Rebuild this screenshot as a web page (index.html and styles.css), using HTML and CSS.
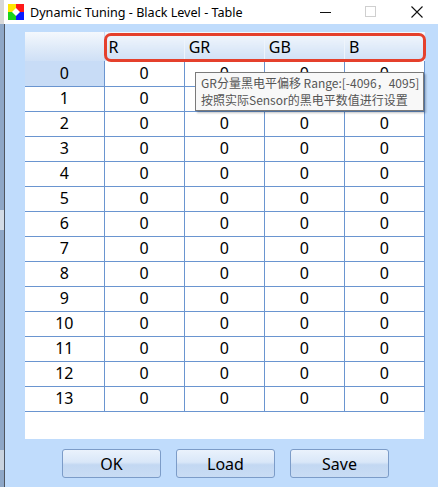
FILE: index.html
```html
<!DOCTYPE html>
<html>
<head>
<meta charset="utf-8">
<link rel="stylesheet" href="styles.css">
</head>
<body>
<div class="window">
  <div class="titlebar">
    <svg class="appicon" width="16" height="16" viewBox="0 0 16 16">
      <rect x="0" y="0" width="8" height="8" fill="#ffe600"/>
      <rect x="8" y="0" width="8" height="8" fill="#ff1a1a"/>
      <rect x="0" y="8" width="8" height="8" fill="#1bd41b"/>
      <rect x="8" y="8" width="8" height="8" fill="#0a1aff"/>
      <polygon points="8,4 12,8 8,12 4,8" fill="#ffffff"/>
    </svg>
    <span class="title">Dynamic Tuning - Black Level - Table</span>
    <div class="caps">
      <svg class="cap" width="46" height="24" viewBox="0 0 46 24"><line x1="18" y1="12.5" x2="29" y2="12.5" stroke="#111" stroke-width="1"/></svg>
      <svg class="cap" width="46" height="24" viewBox="0 0 46 24"><rect x="17.5" y="6.5" width="10" height="10" fill="none" stroke="#cfcfcf" stroke-width="1"/></svg>
      <svg class="cap" width="46" height="24" viewBox="0 0 46 24"><path d="M17.5 6.5 L28.5 17.5 M28.5 6.5 L17.5 17.5" stroke="#111" stroke-width="1.1"/></svg>
    </div>
  </div>
  <div class="main">
    <div class="edge"></div>
    <div class="client">
      <div class="grid">
        <table class="tbl">
          <thead>
            <tr class="hdr">
              <th class="corner"></th>
              <th class="colh">R</th>
              <th class="colh">GR</th>
              <th class="colh">GB</th>
              <th class="colh last">B</th>
            </tr>
          </thead>
          <tbody>
            <tr><td class="rh sel">0</td><td>0</td><td>0</td><td>0</td><td class="last">0</td></tr>
            <tr><td class="rh">1</td><td>0</td><td>0</td><td>0</td><td class="last">0</td></tr>
            <tr><td class="rh">2</td><td>0</td><td>0</td><td>0</td><td class="last">0</td></tr>
            <tr><td class="rh">3</td><td>0</td><td>0</td><td>0</td><td class="last">0</td></tr>
            <tr><td class="rh">4</td><td>0</td><td>0</td><td>0</td><td class="last">0</td></tr>
            <tr><td class="rh">5</td><td>0</td><td>0</td><td>0</td><td class="last">0</td></tr>
            <tr><td class="rh">6</td><td>0</td><td>0</td><td>0</td><td class="last">0</td></tr>
            <tr><td class="rh">7</td><td>0</td><td>0</td><td>0</td><td class="last">0</td></tr>
            <tr><td class="rh">8</td><td>0</td><td>0</td><td>0</td><td class="last">0</td></tr>
            <tr><td class="rh">9</td><td>0</td><td>0</td><td>0</td><td class="last">0</td></tr>
            <tr><td class="rh">10</td><td>0</td><td>0</td><td>0</td><td class="last">0</td></tr>
            <tr><td class="rh">11</td><td>0</td><td>0</td><td>0</td><td class="last">0</td></tr>
            <tr><td class="rh">12</td><td>0</td><td>0</td><td>0</td><td class="last">0</td></tr>
            <tr><td class="rh">13</td><td>0</td><td>0</td><td>0</td><td class="last">0</td></tr>
          </tbody>
        </table>
        <div class="highlight"></div>
        <div class="tooltip">
          <div>GR分量黑电平偏移 Range:[-4096，4095]</div>
          <div>按照实际Sensor的黑电平数值进行设置</div>
        </div>
      </div>
      <div class="buttons">
        <button class="btn">OK</button>
        <button class="btn">Load</button>
        <button class="btn">Save</button>
      </div>
    </div>
  </div>
</div>
</body>
</html>
```
FILE: styles.css
```css
html, body {
  margin: 0;
  padding: 0;
}
body {
  width: 438px;
  height: 487px;
  overflow: hidden;
  background: #c0dcfc;
  font-family: "Noto Sans", "Noto Sans CJK SC", sans-serif;
}
.window {
  display: flex;
  flex-direction: column;
  width: 438px;
  height: 487px;
}
.titlebar {
  height: 24px;
  background: #ffffff;
  display: flex;
  align-items: center;
  border-left: 4px solid #d8d8d8;
  box-sizing: border-box;
}
.appicon {
  margin-left: 4px;
  margin-right: 6px;
  margin-top: -1px;
}
.title {
  font-size: 12.6px;
  color: #000;
  white-space: nowrap;
}
.caps {
  margin-left: auto;
  display: flex;
  margin-right: -2px;
}
.cap {
  display: block;
}
.main {
  flex: 1;
  display: flex;
}
.edge {
  width: 4px;
  background: linear-gradient(to bottom, #8ea7c7 0, #8ea7c7 186px, #d2dbe6 186px, #d2dbe6 206px, #8ea7c7 206px, #8ea7c7 426px, #c9d3df 426px, #c9d3df 446px, #8ea7c7 446px);
  border-right: 1px solid #4e5560;
}
.client {
  flex: 1;
  padding: 8px 0 0 20px;
  display: flex;
  flex-direction: column;
}
.grid {
  position: relative;
  width: 399px;
  height: 407px;
  background: #ffffff;
}
.tbl {
  border-collapse: collapse;
  table-layout: fixed;
  width: 400px;
  font-size: 16px;
  color: #000;
}
.tbl th, .tbl td {
  padding: 0;
  box-sizing: border-box;
}
.hdr th {
  height: 29px;
  background: linear-gradient(to bottom, #f4f8fd 0%, #dde9f8 60%, #cfe0f6 100%);
  font-weight: normal;
  text-align: left;
  padding-left: 4px;
  border-right: 1px solid #eef4fc;
}
.hdr th.corner {
  width: 79px;
  border-right: 1px solid #c8dbf4;
}
.hdr th.colh {
  width: 80px;
}
.tbl td {
  height: 25px;
  text-align: center;
  border-right: 1px solid #6a95d0;
  border-bottom: 1px solid #6a95d0;
  line-height: 23px;
}
.tbl td.sel {
  background: #c8dcf6;
}
.highlight {
  position: absolute;
  left: 79px;
  top: 1px;
  width: 322px;
  height: 29px;
  border: 3px solid #e5402c;
  border-radius: 7px;
  box-sizing: border-box;
}
.tooltip {
  position: absolute;
  left: 170px;
  top: 40px;
  padding: 1px 4px 2px 5px;
  background: #f8f8f8;
  border: 1px solid #7a7a7a;
  box-shadow: 2px 2px 2px rgba(0,0,0,0.25);
  font-family: "Noto Sans CJK SC", sans-serif;
  font-size: 12px;
  line-height: 17px;
  color: #555555;
  white-space: nowrap;
}
.buttons {
  display: flex;
  gap: 15px;
  padding-left: 37px;
  margin-top: 10px;
}
.btn {
  width: 99px;
  height: 29px;
  border: 1px solid #7c9cc8;
  border-radius: 3px;
  background: linear-gradient(to bottom, #eaf2fc 0%, #d9e7f8 45%, #c3d8f2 55%, #c9dcf4 100%);
  font-family: "Noto Sans", sans-serif;
  font-size: 16px;
  color: #000;
  padding: 0;
}
```
